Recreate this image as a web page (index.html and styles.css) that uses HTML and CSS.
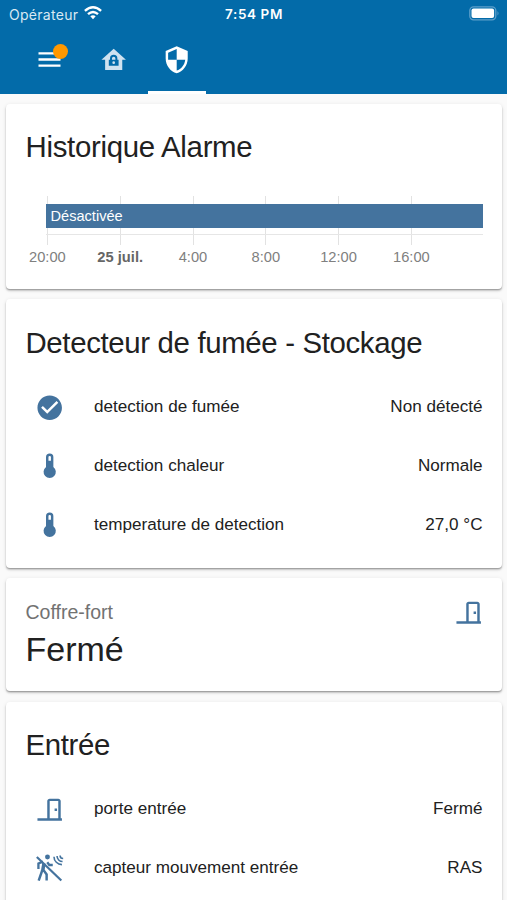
FILE: index.html
```html
<!DOCTYPE html>
<html lang="fr">
<head>
<meta charset="utf-8">
<title>Alarme</title>
<link rel="stylesheet" href="styles.css">
</head>
<body>
<svg class="defs" aria-hidden="true">
  <symbol id="thermometer" viewBox="0 0 24 24"><path d="M15 13V5A3 3 0 0 0 9 5V13A5 5 0 1 0 15 13M12 4A1 1 0 0 1 13 5V8H11V5A1 1 0 0 1 12 4Z"/></symbol>
  <symbol id="door" viewBox="0 0 24 24"><path d="M16,11H18V13H16V11M12,3H19C20.11,3 21,3.89 21,5V19H22V21H2V19H10V5C10,3.89 10.89,3 12,3M12,5V19H19V5H12Z"/></symbol>
</svg>
<header class="header">
  <div class="status">
    <div class="carrier"><span>Opérateur</span>
      <svg class="wifi" viewBox="0 0 18 14"><g fill="none" stroke="#fff" stroke-width="2.4"><path d="M.9 4.9Q9-2.300 17.100 4.900"/><path d="M4 8.200Q9 3.700 14 8.200"/></g><path fill="#fff" d="M6.300 10.300Q9 8.200 11.700 10.300L9 13.300Z"/></svg>
    </div>
    <div class="clock">7:54 PM</div>
    <div class="battery"><svg viewBox="0 0 31 15"><rect x=".8" y=".8" width="26" height="13" rx="3.800" fill="none" stroke="#5d9fca" stroke-width="1.300"/><rect x="2.500" y="2.500" width="22.600" height="9.600" rx="2" fill="#fff"/><path d="M28.500 5q2 2.300 0 4.600Z" fill="#5d9fca"/></svg></div>
  </div>
  <nav class="tabs">
    <div class="menu"><svg viewBox="0 0 24 18"><path d="M.5 2.300H22.500M.5 8.500H22.500M.5 14.700H22.500" stroke="#fff" stroke-width="2.300"/></svg><i class="dot"></i></div>
    <div class="tab dim"><svg class="icon" viewBox="0 0 24 24"><path fill-rule="evenodd" d="M12 3L22 12H19V20.500H5V12H2ZM8 12V17H16V12H15V11A3 3 0 0 0 9 11V12ZM10.600 12V11A1.400 1.400 0 0 1 13.400 11V12ZM12 13.300A1.100 1.100 0 1 1 12 15.500A1.100 1.100 0 1 1 12 13.300Z"/></svg></div>
    <div class="tab active"><svg class="icon" viewBox="0 0 24 24"><path d="M12,12H19C18.470,16.110 15.720,19.780 12,20.920V12H5V6.300L12,3.190M12,1L3,5V11C3,16.550 6.840,21.730 12,23C17.160,21.730 21,16.550 21,11V5L12,1Z"/></svg></div>
  </nav>
</header>
<main class="cards">
  <section class="card history">
    <h1>Historique Alarme</h1>
    <div class="chart">
      <div class="plot"><div class="bar">Désactivée</div></div>
      <div class="ticks"><span>20:00</span><span><b>25 juil.</b></span><span>4:00</span><span>8:00</span><span>12:00</span><span>16:00</span></div>
    </div>
  </section>
  <section class="card smoke">
    <h1>Detecteur de fumée - Stockage</h1>
    <div class="row"><div class="cell"><svg class="icon" viewBox="0 0 24 24"><path d="M12 2C6.500 2 2 6.500 2 12S6.500 22 12 22 22 17.500 22 12 17.500 2 12 2M10 17L5 12L6.410 10.590L10 14.170L17.590 6.580L19 8L10 17Z"/></svg></div><span class="name">detection de fumée</span><span>Non détecté</span></div>
    <div class="row"><div class="cell"><svg class="icon"><use href="#thermometer"/></svg></div><span class="name">detection chaleur</span><span>Normale</span></div>
    <div class="row"><div class="cell"><svg class="icon"><use href="#thermometer"/></svg></div><span class="name">temperature de detection</span><span>27,0 °C</span></div>
  </section>
  <section class="card safe">
    <div class="safe-head"><span>Coffre-fort</span><svg class="icon"><use href="#door"/></svg></div>
    <div class="value">Fermé</div>
  </section>
  <section class="card entry">
    <h1>Entrée</h1>
    <div class="row"><div class="cell"><svg class="icon"><use href="#door"/></svg></div><span class="name">porte entrée</span><span>Fermé</span></div>
    <div class="row"><div class="cell"><svg class="icon" viewBox="0 0 24 24"><circle cx="10.200" cy="3.300" r="2"/><g fill="none" stroke="currentColor"><path stroke-width="1.800" d="M1.500 3.200L21.500 22.500"/><path stroke-width="2.800" d="M7.300 8.500L6.200 15"/><path stroke-width="2" d="M7 14L9.500 17.500V22.500M5.800 14.500L3 22.500"/><path stroke-width="1.900" d="M6.500 7L2.800 8.500V13M10 7.500L11.700 9.800H14.500"/><path stroke-width="1.300" d="M15.500 3A6.500 6.500 0 0 0 22 9.500M18 2.500A4.500 4.500 0 0 0 22.500 7M20.500 2A2.500 2.500 0 0 0 23 4.500"/></g></svg></div><span class="name">capteur mouvement entrée</span><span>RAS</span></div>
  </section>
</main>
</body>
</html>
```
FILE: styles.css
```css
* { box-sizing: border-box; }
html { overflow: hidden; }
body { margin: 0; height: 900px; overflow: hidden; background: #fafafa; color: #212121; font-family: "Liberation Sans", Arial, sans-serif; font-size: 17.1px; }
.defs { display: none; }
.icon { width: 29.4px; height: 29.4px; fill: currentColor; display: block; overflow: visible; }
.header { height: 94px; background: #036ba9; color: #fff; }
.status { height: 28px; display: grid; grid-template-columns: 1fr auto 1fr; align-items: center; padding: 0 7px 0 9px; font-family: Inter, sans-serif; font-size: 14px; }
.carrier { display: flex; align-items: center; gap: 6px; color: #d9e9f3; letter-spacing: .28px; }
.wifi { width: 18px; height: 14px; margin-top: -2px; }
.clock { font-weight: 600; font-size: 13.5px; letter-spacing: .6px; margin-left: -1px; }
.battery { justify-self: end; margin-top: -1px; }
.battery svg { display: block; width: 31px; height: 15px; }
.tabs { display: flex; height: 66px; padding-left: 38px; }
.menu { position: relative; width: 46px; padding-top: 23px; }
.menu svg { display: block; width: 24px; height: 18px; }
.dot { position: absolute; left: 15px; top: 16px; width: 15px; height: 15px; border-radius: 50%; background: #ff9800; }
.tab { width: 58.5px; display: flex; justify-content: center; padding-top: 17px; }
.tab + .tab { margin-left: 5px; }
.dim { color: #cfe2f0; }
.active { border-bottom: 3px solid #fff; }
.cards { display: flex; flex-direction: column; gap: 10px; padding: 10px 5px 0 6px; }
.card { flex: none; background: #fff; border-radius: 4px; padding: 0 19.500px; box-shadow: 0 2px 2px rgba(0,0,0,.16), 0 1px 4px rgba(0,0,0,.1), 0 1px 1px rgba(0,0,0,.2); }
h1 { margin: 0; font-size: 29.4px; font-weight: 400; line-height: 48px; letter-spacing: -.35px; white-space: nowrap; }
.history { height: 185px; padding-top: 19px; }
.history h1 { letter-spacing: -.3px; }
.smoke { height: 269px; padding-top: 20px; }
.safe { height: 113px; padding-top: 18px; }
.entry { height: 230px; margin-top: 1px; padding-top: 19px; }
.chart { margin: 25px 0 0 20px; }
.plot { height: 49px; padding-top: 8px; background: linear-gradient(#e6e6e6, #e6e6e6) 0 38px / 100% 1px no-repeat, repeating-linear-gradient(90deg, transparent 0 1px, #e2e2e2 1px 2px, transparent 2px 72.800px); }
.bar { height: 24px; padding-left: 5px; background: #44739e; color: #fff; font-size: 14.6px; line-height: 25px; }
.ticks { display: flex; margin-left: -34.500px; padding-top: 2px; font-size: 14.7px; line-height: 20px; color: #808080; }
.ticks span { width: 72.800px; flex: none; text-align: center; }
.ticks b { color: #666; }
.row { height: 58.700px; display: flex; align-items: center; white-space: nowrap; }
h1 + .row { margin-top: 11px; }
.cell { width: 49px; display: flex; justify-content: center; margin-right: 19.500px; color: #44739e; }
.name { flex: 1; }
.safe-head { display: flex; justify-content: space-between; height: 34px; line-height: 33px; font-size: 19.500px; color: #727272; }
.safe-head .icon { color: #44739e; margin: 2px -1px 0 0; }
.value { font-size: 34px; line-height: 38px; }
```
